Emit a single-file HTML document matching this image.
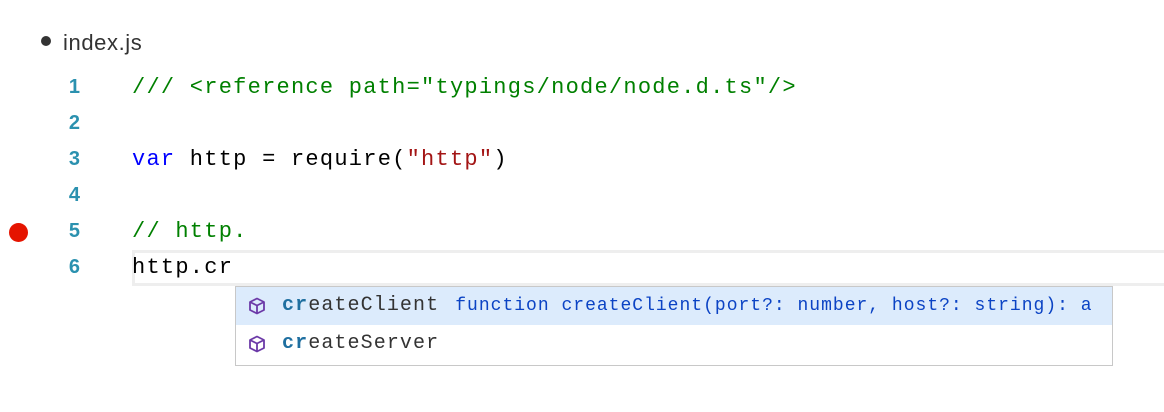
<!DOCTYPE html>
<html><head><style>
body{margin:0;width:1164px;height:412px;background:#fff;position:relative;overflow:hidden;font-family:"Liberation Mono",monospace;}
.tab{position:absolute;left:41px;top:30px;font:22px "Liberation Sans",sans-serif;color:#333;letter-spacing:0.6px}
.tab .dot{display:inline-block;width:10px;height:10px;border-radius:50%;background:#333;margin-right:12px;vertical-align:4px}
.ln{position:absolute;left:40px;width:40px;text-align:right;color:#2b91af;font:bold 20px "Liberation Sans",sans-serif;}
.code{position:absolute;left:132px;font-size:22px;letter-spacing:1.25px;white-space:pre;color:#000;line-height:36px}
.g{color:#008000}.b{color:#0000ff}.r{color:#a31515}
.cur{position:absolute;left:132px;right:0;top:250px;height:30px;border:3px solid #eeeeee;border-right:none}
.bp{position:absolute;left:9px;top:223px;width:19px;height:19px;border-radius:50%;background:#e51400}
.sug{position:absolute;left:235px;top:286px;width:876px;height:78px;border:1px solid #c8c8c8;background:#fff;overflow:hidden}
.row{height:38px;line-height:38px;position:relative;white-space:pre;font-size:20px;letter-spacing:1.1px;padding-left:46px;color:#333}
.row.sel{background:#dcebfc}
.row svg{position:absolute;left:12px;top:10px}
.hl{color:#1f6fa0;font-weight:bold}
.det{color:#0b43c4;font-size:18px;letter-spacing:1px;margin-left:16px}
</style></head><body>
<div class="tab"><span class="dot"></span>index.js</div>
<div class="cur"></div>
<div class="bp"></div>
<div class="ln" style="top:76px">1</div>
<div class="ln" style="top:112px">2</div>
<div class="ln" style="top:148px">3</div>
<div class="ln" style="top:184px">4</div>
<div class="ln" style="top:220px">5</div>
<div class="ln" style="top:256px">6</div>
<div class="code" style="top:70px"><span class="g">/// &lt;reference path="typings/node/node.d.ts"/&gt;</span></div>
<div class="code" style="top:142px"><span class="b">var</span> http = require(<span class="r">"http"</span>)</div>
<div class="code" style="top:214px"><span class="g">// http.</span></div>
<div class="code" style="top:250px">http.cr</div>
<div class="sug">
<div class="row sel"><svg width="18" height="18" viewBox="0 0 18 18"><path d="M9 1.5L16 5v8L9 16.5 2 13V5z M2 5l7 3.5L16 5 M9 8.5v8" fill="none" stroke="#6c3aa8" stroke-width="1.8" stroke-linejoin="round"/></svg><span class="hl">cr</span>eateClient<span class="det">function createClient(port?: number, host?: string): a</span></div>
<div class="row"><svg width="18" height="18" viewBox="0 0 18 18"><path d="M9 1.5L16 5v8L9 16.5 2 13V5z M2 5l7 3.5L16 5 M9 8.5v8" fill="none" stroke="#6c3aa8" stroke-width="1.8" stroke-linejoin="round"/></svg><span class="hl">cr</span>eateServer</div>
</div>
</body></html>
